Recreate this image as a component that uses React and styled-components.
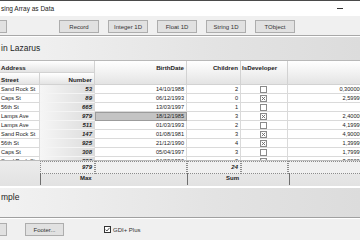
import React from 'react';
import styled, { createGlobalStyle } from 'styled-components';

const GlobalStyle = createGlobalStyle`
  html, body {
    margin: 0;
    padding: 0;
    width: 360px;
    height: 240px;
    overflow: hidden;
    background: #f0f0f0;
    font-family: "Liberation Sans", Arial, sans-serif;
    color: #222;
  }
`;

const Window = styled.div`
  width: 360px;
  height: 240px;
  display: flex;
  flex-direction: column;
  overflow: hidden;
`;

const TitleBar = styled.div`
  height: 15px;
  flex: none;
  background: #fff;
  border-top: 1px solid #4a4a4a;
  display: flex;
  align-items: center;
  justify-content: space-between;
  padding: 0 17px 0 1px;
  font-size: 6.5px;
`;

const Minimize = styled.span`
  width: 6px;
  height: 1px;
  background: #333;
`;

const Toolbar = styled.div`
  height: 19px;
  flex: none;
  display: flex;
  align-items: center;
  gap: 9px;
  background: #f0f0f0;
  border-bottom: 1px solid #a8a8a8;
  padding-top: 2px;
  box-sizing: border-box;
  height: 20px;
`;

const Button = styled.div`
  flex: none;
  width: ${({ w }) => w || 38}px;
  height: 11px;
  margin-left: ${({ ml }) => ml || 0}px;
  background: #e1e1e1;
  border: 1px solid #adadad;
  display: flex;
  align-items: center;
  justify-content: center;
  font-size: 6px;
  color: #333;
`;

const Banner = styled.div`
  height: ${({ h }) => h}px;
  flex: none;
  background: linear-gradient(to right, #f2f2f2, #e3e3e3 60%, #dcdcdc);
  border-top: 1px solid #fff;
  font-size: 8.5px;
  color: #1e1e1e;
  padding: ${({ pt }) => pt}px 0 0 1px;
  box-sizing: border-box;
`;

const cols = '40px 55px 92px 54px 47px 84px';

const Grid = styled.div`
  height: 126px;
  flex: none;
  border-top: 1px solid #b8b8b8;
  background: #fff;
  display: flex;
  flex-direction: column;
  overflow: hidden;
`;

const Head = styled.div`
  display: grid;
  grid-template-columns: ${cols};
  grid-template-rows: 12px 12px;
  width: 372px;
  flex: none;
`;

const HeadCell = styled.div`
  grid-column: ${({ col }) => col};
  grid-row: ${({ row }) => row};
  background: linear-gradient(#ffffff, #e4e4e4);
  border-right: 1px solid #d2d2d2;
  border-bottom: 1px solid #d2d2d2;
  font-size: 6.2px;
  font-weight: bold;
  text-align: ${({ align }) => align || 'left'};
  padding: 3px 2px 0 1px;
  box-sizing: border-box;
  white-space: nowrap;
`;

const Body = styled.div`
  height: 75px;
  flex: none;
  overflow: hidden;
`;

const Row = styled.div`
  display: grid;
  grid-template-columns: ${cols};
  width: 372px;
  height: 9px;
`;

const Cell = styled.div`
  border-right: 1px solid #dadada;
  border-bottom: 1px solid #dadada;
  font-size: 5.6px;
  line-height: 8px;
  padding: 0 2px 0 1px;
  text-align: ${({ align }) => align || 'left'};
  white-space: nowrap;
  overflow: hidden;
  box-sizing: border-box;
  background: #fff;
`;

const NumCell = styled(Cell)`
  background: linear-gradient(to right, #f6f6f6, #dcdcdc);
  border-bottom-color: #f4f4f4;
  font-size: 6px;
  font-weight: bold;
  font-style: italic;
  text-align: right;
`;

const DateCell = styled(Cell)`
  text-align: right;
  ${({ selected }) => selected && `
    background: #c4c4c4;
    border: 1px solid #9c9c9c;
    line-height: 7px;
  `}
`;

const CheckCell = styled(Cell)`
  display: flex;
  align-items: center;
  justify-content: center;
`;

const Box = styled.span`
  width: 5px;
  height: 5px;
  border: 1px solid #8a8a8a;
  background: #fff;
  display: flex;
  align-items: center;
  justify-content: center;
`;

const Footer = styled.div`
  height: 26px;
  flex: none;
  background: linear-gradient(#ececec, #e2e2e2);
  border-top: 1px solid #bcbcbc;
  box-sizing: border-box;
`;

const FootRow = styled.div`
  display: grid;
  grid-template-columns: ${({ tpl }) => tpl};
  width: 372px;
  height: 12px;
`;

const FootCell = styled.div`
  font-size: 6px;
  font-weight: bold;
  font-style: ${({ italic }) => (italic ? 'italic' : 'normal')};
  line-height: 11px;
  text-align: ${({ align }) => align || 'left'};
  padding: 0 ${({ pr }) => pr || 0}px 0 ${({ pl }) => pl || 0}px;
  border: ${({ dotted }) => (dotted ? '1px dotted #8c8c8c' : 'none')};
  border-left: ${({ sep, dotted }) => (sep ? '1px solid #6e6e6e' : dotted ? '1px dotted #8c8c8c' : 'none')};
  background: ${({ dotted }) => (dotted ? '#f0f0f0' : 'transparent')};
  box-sizing: border-box;
  white-space: nowrap;
`;

const BottomBar = styled.div`
  flex: 1;
  border-top: 1px solid #a0a0a0;
  background: #f0f0f0;
  display: flex;
  align-items: flex-start;
  gap: 18px;
  padding-top: 5px;
  box-shadow: inset 0 1px 0 #fff;
`;

const CheckLabel = styled.label`
  display: flex;
  align-items: center;
  gap: 2px;
  margin-left: 22px;
  margin-top: 3px;
  font-size: 6px;
  color: #333;
`;

const CheckBox = styled.span`
  width: 5px;
  height: 5px;
  border: 1px solid #333;
  background: #fff;
  display: flex;
  align-items: center;
  justify-content: center;
`;

const Cross = () => (
  <svg width="5" height="5" viewBox="0 0 5 5">
    <path d="M0.8 0.8L4.2 4.2M4.2 0.8L0.8 4.2" stroke="#6a6a6a" strokeWidth="0.9" />
  </svg>
);

const Tick = () => (
  <svg width="5" height="5" viewBox="0 0 5 5">
    <path d="M0.5 2.6L1.9 4L4.6 0.8" stroke="#222" strokeWidth="0.8" fill="none" />
  </svg>
);

const rows = [
  ['Sand Rock St', '53', '14/10/1988', '2', false, '0,30000000'],
  ['Caps St', '89', '06/12/1993', '0', true, '2,5999999'],
  ['56th St', '665', '13/03/1997', '1', false, ''],
  ['Lamps Ave', '979', '18/12/1985', '3', true, '2,4000000'],
  ['Lamps Ave', '511', '01/03/1993', '2', false, '4,1999999'],
  ['Sand Rock St', '147', '01/08/1981', '3', true, '4,9000000'],
  ['56th St', '925', '21/12/1990', '4', true, '1,3999999'],
  ['Caps St', '308', '05/04/1997', '3', false, '1,7999999'],
  ['Sand Rock St', '893', '24/02/1990', '2', true, '3,2000000'],
];

export default function App() {
  return (
    <Window>
      <GlobalStyle />
      <TitleBar>
        <span>sing Array as Data</span>
        <Minimize />
      </TitleBar>
      <Toolbar>
        <Button ml={-33} />
        <Button ml={43}>Record</Button>
        <Button>Integer 1D</Button>
        <Button>Float 1D</Button>
        <Button>String 1D</Button>
        <Button>TObject</Button>
      </Toolbar>
      <Banner h={24} pt={6}>in Lazarus</Banner>
      <Grid>
        <Head>
          <HeadCell col="1 / 3" row="1">Address</HeadCell>
          <HeadCell col="1" row="2">Street</HeadCell>
          <HeadCell col="2" row="2" align="right">Number</HeadCell>
          <HeadCell col="3" row="1 / 3" align="right">BirthDate</HeadCell>
          <HeadCell col="4" row="1 / 3" align="right">Children</HeadCell>
          <HeadCell col="5" row="1 / 3">IsDeveloper</HeadCell>
          <HeadCell col="6" row="1 / 3" />
        </Head>
        <Body>
          {rows.map(([street, num, date, kids, dev, val], i) => (
            <Row key={i}>
              <Cell>{street}</Cell>
              <NumCell>{num}</NumCell>
              <DateCell selected={i === 3}>{date}</DateCell>
              <Cell align="right">{kids}</Cell>
              <CheckCell>
                <Box>{dev && <Cross />}</Box>
              </CheckCell>
              <Cell align="right">{val}</Cell>
            </Row>
          ))}
        </Body>
        <Footer>
          <FootRow tpl={cols}>
            <FootCell />
            <FootCell dotted italic align="right" pr={2}>979</FootCell>
            <FootCell dotted />
            <FootCell dotted italic align="right" pr={2}>24</FootCell>
            <FootCell dotted />
            <FootCell dotted />
          </FootRow>
          <FootRow tpl="40px 147px 102px 1fr">
            <FootCell />
            <FootCell sep pl={39}>Max</FootCell>
            <FootCell sep pl={38}>Sum</FootCell>
            <FootCell sep />
          </FootRow>
        </Footer>
      </Grid>
      <Banner h={30} pt={4}>mple</Banner>
      <BottomBar>
        <Button ml={-33} />
        <Button w={37}>Footer...</Button>
        <CheckLabel>
          <CheckBox><Tick /></CheckBox>
          GDI+ Plus
        </CheckLabel>
      </BottomBar>
    </Window>
  );
}
